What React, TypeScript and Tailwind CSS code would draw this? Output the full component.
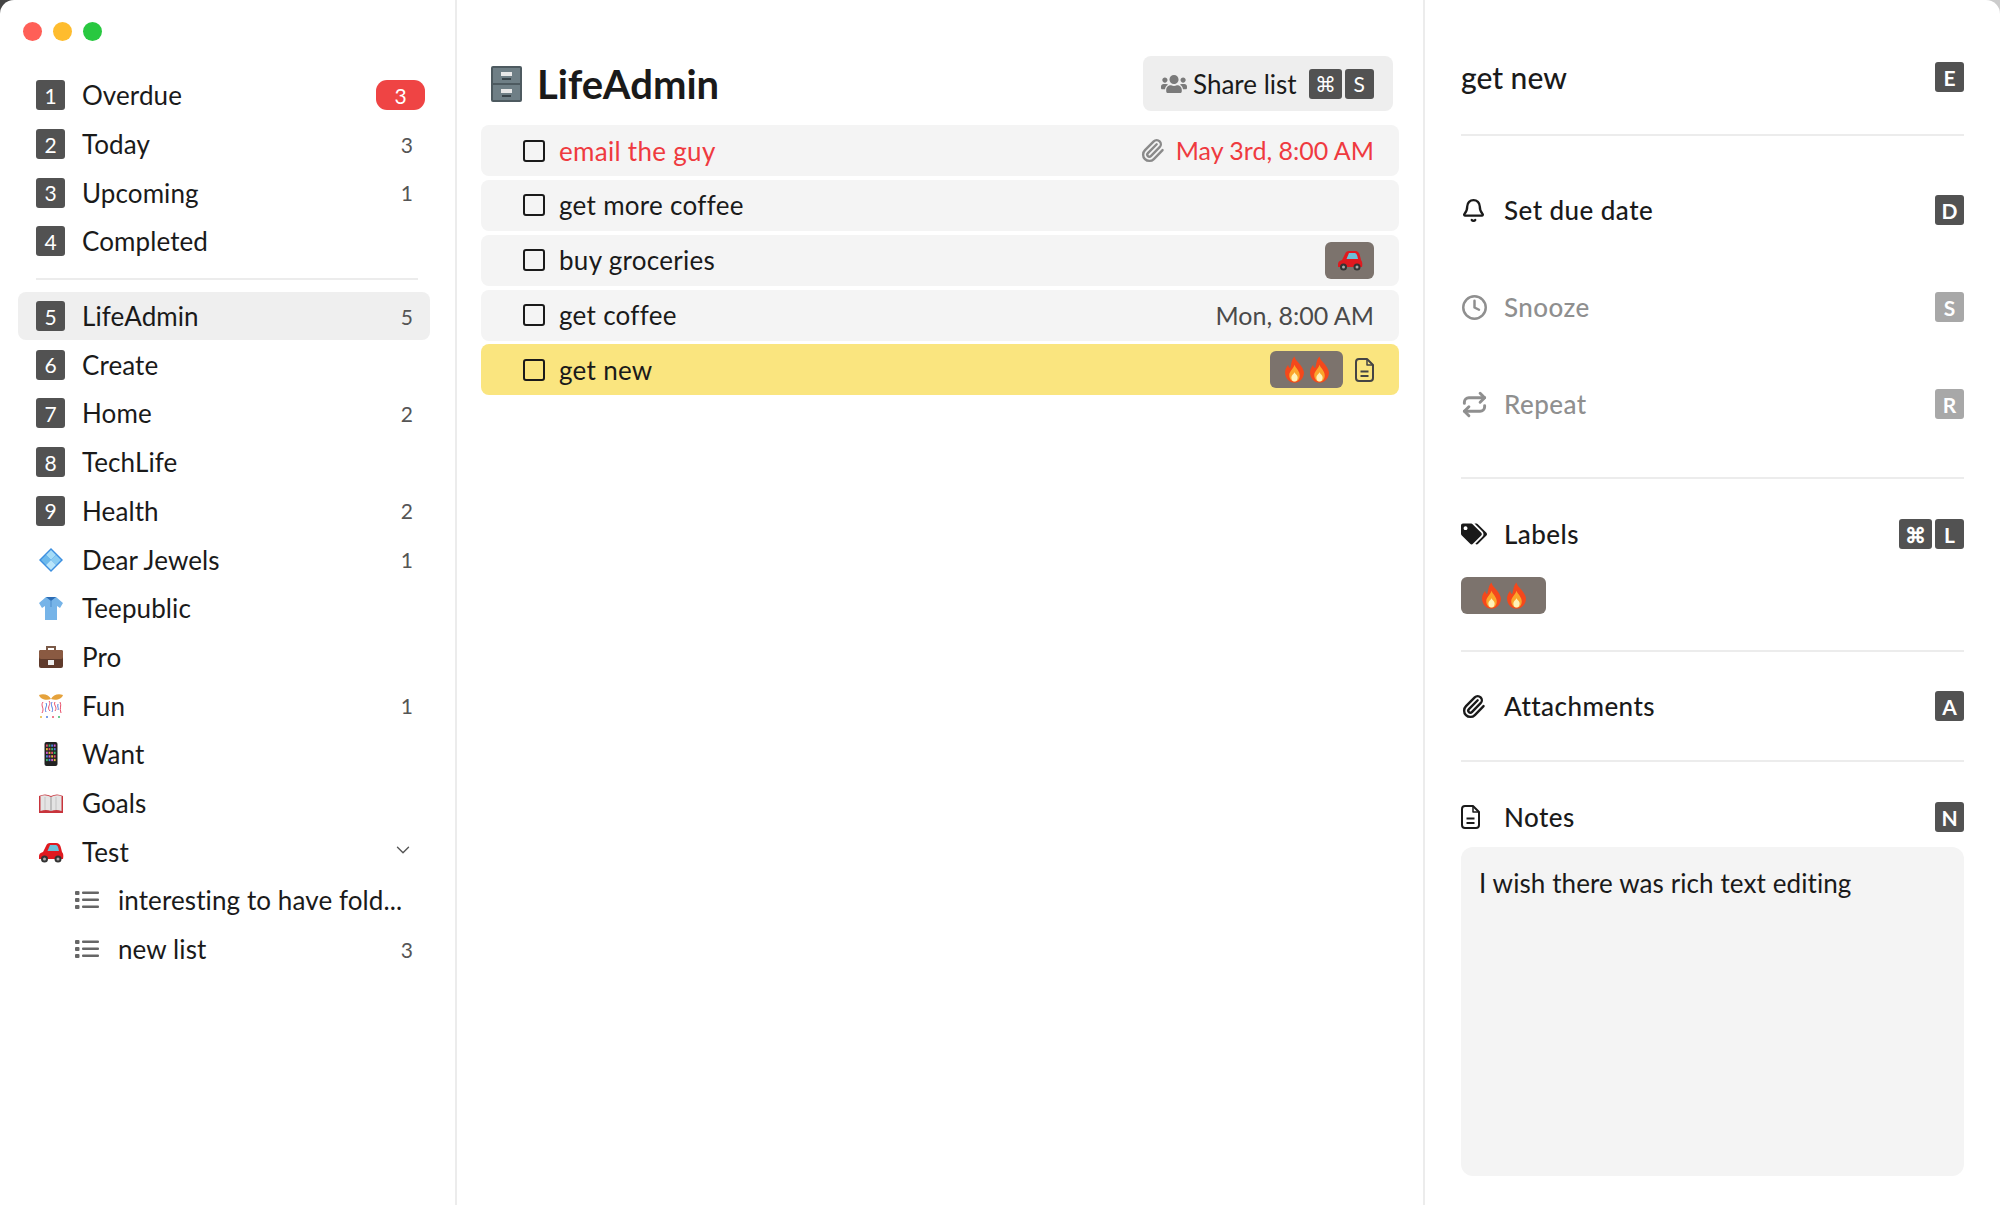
import { Bell, ChevronDown, Clock, Paperclip, Repeat } from "lucide-react";
import { FaTags, FaUsers } from "react-icons/fa";

const font = { fontFamily: '"Lato", "Noto Sans", sans-serif' };

function Key({ children, dim, wide, bold }: { children: React.ReactNode; dim?: boolean; wide?: boolean; bold?: boolean }) {
  return (
    <span
      className={`flex h-[30px] shrink-0 items-center justify-center rounded-[3px] text-[21px] leading-none text-white ${wide ? "w-[33px]" : "w-[29px]"} ${dim ? "bg-[#a8a8a8]" : "bg-[#525252]"} ${bold ? "font-bold" : ""}`}
    >
      {children}
    </span>
  );
}

function Gem() {
  return (
    <svg viewBox="0 0 26 26" className="h-[26px] w-[26px]">
      <path d="M13 1 25 13 13 25 1 13Z" fill="#3d8fe0" />
      <path d="M13 3 18 8 13 13 8 8Z" fill="#a5dcf7" />
      <path d="M18 8 23 13 18 18 13 13Z" fill="#8accf2" />
      <path d="M8 8 13 13 8 18 3 13Z" fill="#6cb9ec" />
      <path d="M13 13 18 18 13 23 8 18Z" fill="#b9e5fa" />
    </svg>
  );
}

function Shirt() {
  return (
    <svg viewBox="0 0 26 26" className="h-[26px] w-[26px]">
      <path d="M8 2 1 8l3 5 3-2v14h12V11l3 2 3-5-7-6Z" fill="#76b4e8" />
      <path d="M8 2h10l-5 4Z" fill="#2b6cb5" />
      <path d="M13 6v6" stroke="#4a8ccc" strokeWidth="1" />
    </svg>
  );
}

function Briefcase() {
  return (
    <svg viewBox="0 0 26 26" className="h-[26px] w-[26px]">
      <path d="M9 7V3h8v4" fill="none" stroke="#7a5a48" strokeWidth="2" />
      <rect x="1" y="6" width="24" height="18" rx="2" fill="#5f3a2b" />
      <rect x="1" y="6" width="24" height="9" rx="2" fill="#8a5a42" />
      <rect x="10" y="16" width="6" height="5" fill="#eee" />
    </svg>
  );
}

function Confetti() {
  return (
    <svg viewBox="0 0 26 26" className="h-[26px] w-[26px]">
      <path d="M13 6C11 2 6 0 1 2c1 4 7 6 12 4Zm0 0c2-4 7-6 12-4-1 4-7 6-12 4Z" fill="#e5a23c" />
      <path d="M5 9c-3 4 2 6-1 11M11 8c3 3-3 6 1 10M17 9c-2 3 3 5 0 9M22 9c2 4-1 6 1 11" fill="none" stroke="#e8506a" strokeWidth="1" />
      <path d="M8 10c2 3-2 5 0 9M14 9c-2 4 2 6 0 10M20 11c-1 3 1 4 0 6" fill="none" stroke="#4f7fe0" strokeWidth="1" />
      <circle cx="3" cy="24" r="1" fill="#e8b93c" />
      <circle cx="9" cy="24" r="1" fill="#4f7fe0" />
      <circle cx="15" cy="24" r="1" fill="#e8506a" />
      <circle cx="21" cy="24" r="1" fill="#3cba6a" />
    </svg>
  );
}

function Phone() {
  const dots = ["#e8506a", "#4f7fe0", "#e8b93c", "#3cba6a", "#d05ad0"];
  return (
    <svg viewBox="0 0 26 26" className="h-[26px] w-[26px]">
      <rect x="6.5" y="1" width="13" height="24" rx="2" fill="#222" />
      {Array.from({ length: 20 }).map((_, i) => (
        <rect key={i} x={8 + (i % 4) * 2.6} y={3.5 + Math.floor(i / 4) * 3.6} width="1.8" height="2.2" fill={dots[(i * 3) % 5]} />
      ))}
    </svg>
  );
}

function Book() {
  return (
    <svg viewBox="0 0 26 26" className="h-[26px] w-[26px]">
      <path d="M1 6q6-3 12 0 6-3 12 0v17H1Z" fill="#c8343c" />
      <path d="M2.5 6q5-2 10.500 1 5-3 10.500-1v15q-5-2-10.500 0-5-2-10.500 0Z" fill="#e4e4e4" />
      <path d="M13 7v14" stroke="#999" strokeWidth="1" />
      <path d="M7 7v13M18 7v13" stroke="#c4c4c4" strokeWidth="1" />
    </svg>
  );
}

function Car() {
  return (
    <svg viewBox="0 0 26 26" className="h-[26px] w-[26px]">
      <path d="M1 20v-3q0-3 4-4l3-6q1-3 4-3h6q4 0 5 5l1 4q2 2 1 7Z" fill="#e0191f" />
      <path d="M9.500 12 12 6h6q2 0 3 6Z" fill="#6cc0d8" />
      <circle cx="6.500" cy="20" r="3.500" fill="#333" />
      <circle cx="6.500" cy="20" r="1.500" fill="#aaa" />
      <circle cx="20" cy="20" r="3.500" fill="#333" />
      <circle cx="20" cy="20" r="1.500" fill="#aaa" />
    </svg>
  );
}

function Cabinet() {
  return (
    <svg viewBox="0 0 31 36" className="h-[36px] w-[31px] shrink-0">
      <rect width="31" height="36" rx="2" fill="#4d5a60" />
      <rect x="2" y="2" width="27" height="15" fill="#6f7f86" />
      <rect x="2" y="19" width="27" height="15" fill="#6f7f86" />
      <rect x="10" y="6" width="11" height="4" fill="#e8e8e8" />
      <rect x="10" y="23" width="11" height="4" fill="#e8e8e8" />
      <rect x="11" y="12" width="9" height="2" fill="#39444a" />
      <rect x="11" y="29" width="9" height="2" fill="#39444a" />
    </svg>
  );
}

function Flame() {
  return (
    <svg viewBox="0 0 20 25" className="h-[27px] w-[21px]">
      <path d="M10 0c1 5 8 8 9 15 0 6-4 10-9 10S1 21 1 15c0-3 2-6 3-7 0 2 1 3 2 3 1-4 1-8 4-11Z" fill="#f4481c" />
      <path d="M10 8c1 3 5 6 5 10 0 4-2 6-5 6s-5-3-5-6c0-4 4-6 5-10Z" fill="#fba52a" />
      <path d="M10 15c1 2 3 3 3 5s-1 4-3 4-3-2-3-4 2-3 3-5Z" fill="#fff2b8" />
    </svg>
  );
}

function Flames() {
  return (
    <span className="flex items-center gap-[4px]">
      <Flame />
      <Flame />
    </span>
  );
}

function ListIcon() {
  return (
    <svg viewBox="0 0 27 20" className="h-[20px] w-[27px] text-[#666]" fill="currentColor">
      <rect x="2" y="1" width="4.500" height="4" rx="1" />
      <rect x="2" y="8" width="4.500" height="4" rx="1" />
      <rect x="2" y="15" width="4.500" height="4" rx="1" />
      <rect x="9" y="1.500" width="17" height="2.500" rx="1" />
      <rect x="9" y="8.500" width="17" height="2.500" rx="1" />
      <rect x="9" y="15.500" width="17" height="2.500" rx="1" />
    </svg>
  );
}

function DocIcon({ className }: { className: string }) {
  return (
    <svg viewBox="0 0 19 24" className={`h-[24px] w-[19px] ${className}`} fill="none" stroke="currentColor" strokeWidth="2" strokeLinejoin="round">
      <path d="M4 1h8l6 6v13a3 3 0 0 1-3 3H4a3 3 0 0 1-3-3V4a3 3 0 0 1 3-3Z" />
      <path d="M12 1v6h6" strokeWidth="1.500" />
      <path d="M5.500 13.500h8M5.500 18h8" />
    </svg>
  );
}

function SideRow({ lead, label, count, active, nested, chevron }: { lead: React.ReactNode; label: string; count?: string; active?: boolean; nested?: boolean; chevron?: boolean }) {
  return (
    <div className={`flex h-[48.7px] items-center rounded-lg pr-[17px] ${active ? "bg-[#efefef]" : ""} ${nested ? "pl-[54px]" : "pl-[18px]"}`}>
      <span className="mr-[17px] flex w-[29px] shrink-0 items-center justify-center">{lead}</span>
      <span className="flex-1 whitespace-nowrap text-[26px] leading-[32px] tracking-[0.1px] text-[#1a1a1a]">{label}</span>
      {count && <span className="text-[21px] leading-none text-[#555]">{count}</span>}
      {chevron && <ChevronDown size={22} strokeWidth={1.5} className="-mr-px -mt-1 text-[#555]" />}
    </div>
  );
}

function Task({ label, red, highlight, children }: { label: string; red?: boolean; highlight?: boolean; children?: React.ReactNode }) {
  return (
    <div className={`flex h-[51px] items-center rounded-lg pl-[42px] pr-[25px] ${highlight ? "bg-[#fae57f]" : "bg-[#f4f4f4]"}`}>
      <span className="mr-[14px] h-[22px] w-[22px] rounded-[3px] border-2 border-[#1a1a1a]" />
      <span className={`flex-1 text-[26px] leading-[32px] tracking-[0.3px] ${red ? "text-[#ef3a3f]" : "text-[#1a1a1a]"}`}>{label}</span>
      {children}
    </div>
  );
}

function Chip({ children, className }: { children: React.ReactNode; className: string }) {
  return <span className={`flex h-[37px] items-center justify-center rounded-md bg-[#7c736d] ${className}`}>{children}</span>;
}

function Action({ icon, label, keys, dim }: { icon: React.ReactNode; label: string; keys: string[]; dim?: boolean }) {
  return (
    <div className="flex items-center">
      <span className={`flex w-[43px] shrink-0 items-center ${dim ? "text-[#8f8f8f]" : "text-[#1a1a1a]"}`}>{icon}</span>
      <span className={`flex-1 text-[26px] font-medium leading-none tracking-[0.45px] ${dim ? "text-[#8f8f8f]" : "text-[#1a1a1a]"}`}>{label}</span>
      <span className="flex gap-[3px]">
        {keys.map((k) => (
          <Key key={k} dim={dim} wide={k === "⌘"} bold>
            {k}
          </Key>
        ))}
      </span>
    </div>
  );
}

export default function App() {
  return (
    <div className="h-[1205px] w-[2000px] overflow-hidden bg-linear-to-r from-[#444444] to-[#cccccc]" style={font}>
      <div className="flex h-full overflow-hidden rounded-t-[14px] bg-white">
        {/* Sidebar */}
        <aside className="flex w-[457px] shrink-0 flex-col border-r-2 border-[#ececec] pl-[18px] pr-[25px]">
          <div className="flex gap-[11px] pl-[5px] pt-[22px]">
            <span className="h-[19px] w-[19px] rounded-full bg-[#ff5f57]" />
            <span className="h-[19px] w-[19px] rounded-full bg-[#febc2e]" />
            <span className="h-[19px] w-[19px] rounded-full bg-[#28c840]" />
          </div>
          <div className="mt-[30px]">
            <div className="flex h-[48.7px] items-center pl-[18px]">
              <span className="mr-[17px] flex w-[29px] justify-center">
                <Key>1</Key>
              </span>
              <span className="flex-1 text-[26px] leading-[32px] tracking-[0.1px] text-[#1a1a1a]">Overdue</span>
              <span className="flex h-[30px] w-[49px] items-center justify-center rounded-[11px] bg-[#ef4444] text-[21px] text-white">3</span>
              <span className="w-[5px]" />
            </div>
            <SideRow lead={<Key>2</Key>} label="Today" count="3" />
            <SideRow lead={<Key>3</Key>} label="Upcoming" count="1" />
            <SideRow lead={<Key>4</Key>} label="Completed" />
          </div>
          <hr className="mb-[12px] ml-[18px] mr-[12px] mt-[12px] border-t-2 border-[#ececec]" />
          <SideRow lead={<Key>5</Key>} label="LifeAdmin" count="5" active />
          <SideRow lead={<Key>6</Key>} label="Create" />
          <SideRow lead={<Key>7</Key>} label="Home" count="2" />
          <SideRow lead={<Key>8</Key>} label="TechLife" />
          <SideRow lead={<Key>9</Key>} label="Health" count="2" />
          <SideRow lead={<Gem />} label="Dear Jewels" count="1" />
          <SideRow lead={<Shirt />} label="Teepublic" />
          <SideRow lead={<Briefcase />} label="Pro" />
          <SideRow lead={<Confetti />} label="Fun" count="1" />
          <SideRow lead={<Phone />} label="Want" />
          <SideRow lead={<Book />} label="Goals" />
          <SideRow lead={<Car />} label="Test" chevron />
          <SideRow lead={<ListIcon />} label="interesting to have fold..." nested />
          <SideRow lead={<ListIcon />} label="new list" count="3" nested />
        </aside>

        {/* Task list */}
        <main className="flex w-[968px] shrink-0 flex-col border-r-2 border-[#ececec] pl-[24px] pr-[24px]">
          <div className="flex h-[125px] items-start justify-between pl-[10px] pr-[6px] pt-[56px]">
            <div className="flex items-center gap-[15px] pt-[8px]">
              <Cabinet />
              <h1 className="text-[40px] font-bold leading-none text-[#1a1a1a]">LifeAdmin</h1>
            </div>
            <div className="flex h-[55px] w-[250px] items-center rounded-lg bg-[#eeeeee] pl-[18px]">
              <FaUsers size={26} className="mr-[6px] text-[#7a7a7a]" />
              <span className="mr-3 text-[26px] leading-none text-[#1a1a1a]">Share list</span>
              <span className="flex gap-[3px]">
                <Key wide>⌘</Key>
                <Key>S</Key>
              </span>
            </div>
          </div>
          <div className="flex flex-col gap-[3.85px]">
            <Task label="email the guy" red>
              <Paperclip size={25} strokeWidth={2.3} className="mr-[11px] text-[#8a8a8a]" />
              <span className="text-[25px] leading-none text-[#ef3a3f]">May 3rd, 8:00 AM</span>
            </Task>
            <Task label="get more coffee" />
            <Task label="buy groceries">
              <Chip className="w-[49px]">
                <Car />
              </Chip>
            </Task>
            <Task label="get coffee">
              <span className="text-[25px] leading-none text-[#4a4a4a]">Mon, 8:00 AM</span>
            </Task>
            <Task label="get new" highlight>
              <Chip className="mr-[12px] w-[73px]">
                <Flames />
              </Chip>
              <DocIcon className="text-[#444]" />
            </Task>
          </div>
        </main>

        {/* Detail panel */}
        <section className="flex min-w-0 flex-1 flex-col px-[36px]">
          <div className="flex h-[136px] items-start justify-between border-b-2 border-[#ececec] pt-[62px]">
            <span className="text-[30px] font-medium leading-[30px] text-[#1a1a1a]">get new</span>
            <Key bold>E</Key>
          </div>
          <div className="flex flex-col gap-[67px] pt-[59px]">
            <Action icon={<Bell size={25} strokeWidth={2.2} />} label="Set due date" keys={["D"]} />
            <Action icon={<Clock size={27} strokeWidth={2.2} />} label="Snooze" keys={["S"]} dim />
            <Action icon={<Repeat size={27} strokeWidth={2.6} />} label="Repeat" keys={["R"]} dim />
          </div>
          <div className="mt-[58px] border-t-2 border-[#ececec] pb-[36px] pt-[40px]">
            <Action icon={<FaTags size={26} />} label="Labels" keys={["⌘", "L"]} />
            <Chip className="mt-[28px] w-[85px]">
              <Flames />
            </Chip>
          </div>
          <div className="border-t-2 border-[#ececec] pb-[39px] pt-[39px]">
            <Action icon={<Paperclip size={25} strokeWidth={2.3} />} label="Attachments" keys={["A"]} />
          </div>
          <div className="border-t-2 border-[#ececec] pt-[40px]">
            <Action icon={<DocIcon className="" />} label="Notes" keys={["N"]} />
          </div>
          <div className="mb-[29px] mt-[15px] flex-1 rounded-xl bg-[#f4f4f4] px-[18px] pt-[20px] text-[26px] leading-[32px] tracking-[0.1px] text-[#1a1a1a]">
            I wish there was rich text editing
          </div>
        </section>
      </div>
    </div>
  );
}
